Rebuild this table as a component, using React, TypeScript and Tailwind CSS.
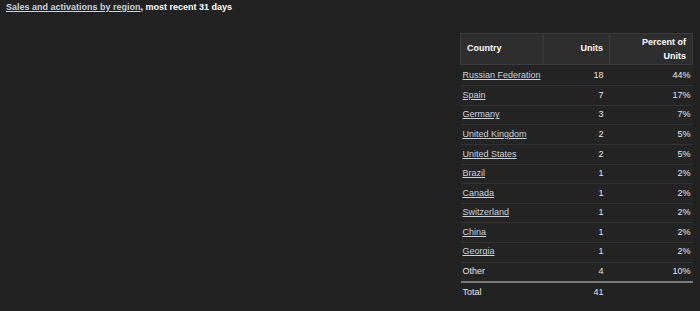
import React from "react";

type Row = { country: string; units: number; pct: string; link: boolean };

const ROWS: Row[] = [
  { country: "Russian Federation", units: 18, pct: "44%", link: true },
  { country: "Spain", units: 7, pct: "17%", link: true },
  { country: "Germany", units: 3, pct: "7%", link: true },
  { country: "United Kingdom", units: 2, pct: "5%", link: true },
  { country: "United States", units: 2, pct: "5%", link: true },
  { country: "Brazil", units: 1, pct: "2%", link: true },
  { country: "Canada", units: 1, pct: "2%", link: true },
  { country: "Switzerland", units: 1, pct: "2%", link: true },
  { country: "China", units: 1, pct: "2%", link: true },
  { country: "Georgia", units: 1, pct: "2%", link: true },
  { country: "Other", units: 4, pct: "10%", link: false },
];

export default function App() {
  return (
    <div
      className="w-[700px] h-[311px] bg-[#222222] text-[#e6e6e6] overflow-hidden text-[9px]"
      style={{ fontFamily: '"Liberation Sans", Arial, sans-serif' }}
    >
      <div className="pl-[6px] pt-[1px] font-bold">
        <a className="underline text-[#c9d3dc] cursor-pointer">Sales and activations by region</a>
        <span className="text-white">, most recent 31 days</span>
      </div>

      <div className="flex justify-end pr-[7px] mt-[18px]">
        <table className="w-[233px] border-collapse">
          <thead>
            <tr className="bg-[#2e2e2e] text-white font-bold">
              <th className="w-[83px] h-[31px] border border-[#3d3d3d] text-left pl-[6px]">Country</th>
              <th className="w-[66px] border border-[#3d3d3d] text-right pr-[6px]">Units</th>
              <th className="border border-[#3d3d3d] text-right pr-[6px] leading-[14px]">
                Percent of
                <br />
                Units
              </th>
            </tr>
          </thead>
          <tbody>
            {ROWS.map((r, i) => (
              <tr
                key={r.country}
                className={`${i === 0 ? "h-[21.7px] align-bottom" : "h-[19.6px]"} border-b border-[#333333] bg-[#242424]`}
              >
                <td className={`pl-[2px] ${i === 0 ? "pb-[3px]" : ""}`}>
                  {r.link ? (
                    <a className="underline text-[#c9d3dc] cursor-pointer">{r.country}</a>
                  ) : (
                    <span>{r.country}</span>
                  )}
                </td>
                <td className={`text-right pr-[6px] ${i === 0 ? "pb-[3px]" : ""}`}>{r.units}</td>
                <td className={`text-right pr-[2px] ${i === 0 ? "pb-[3px]" : ""}`}>{r.pct}</td>
              </tr>
            ))}
            <tr className="h-[22px] border-t-2 border-[#7a7a7a]">
              <td className="pl-[2px]">Total</td>
              <td className="text-right pr-[6px]">41</td>
              <td />
            </tr>
          </tbody>
        </table>
      </div>
    </div>
  );
}
